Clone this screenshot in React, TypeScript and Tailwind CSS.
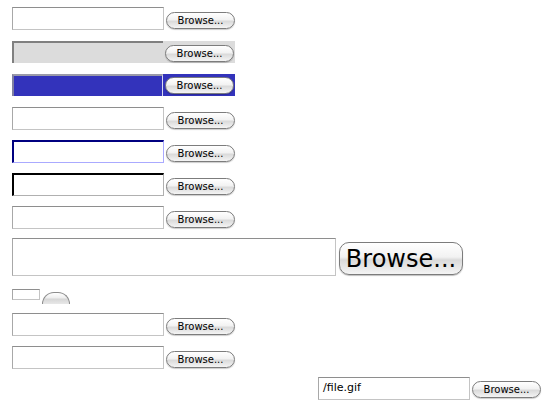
import React from 'react';

const font = { fontFamily: '"DejaVu Sans", "Liberation Sans", sans-serif' };

function AquaButton({ big, tiny }: { big?: boolean; tiny?: boolean }) {
  if (tiny) {
    return (
      <div className="ml-[2px] mt-[3px] h-[12px] w-[28px] rounded-t-full border border-b-0 border-[#8c8c8c] bg-[linear-gradient(#ffffff,#eeeeee_45%,#d6d6d6_55%,#e8e8e8)]" />
    );
  }
  if (big) {
    return (
      <div
        style={font}
        className="ml-[3px] mt-[4px] flex h-[33px] w-[124px] items-center justify-center rounded-[10px] border border-[#7c7c7c] bg-[linear-gradient(#ffffff,#f2f2f2_45%,#dadada_55%,#f4f4f4)] text-[24px] leading-none text-black shadow-[0_1px_1px_rgba(0,0,0,0.25)]"
      >
        Browse...
      </div>
    );
  }
  return (
    <div
      style={font}
      className="ml-[2px] flex h-[17px] w-[69px] items-center justify-center rounded-full border border-[#7c7c7c] bg-[linear-gradient(#ffffff,#f2f2f2_45%,#dadada_55%,#f4f4f4)] text-[10px] leading-none text-black shadow-[0_1px_1px_rgba(0,0,0,0.2)]"
    >
      Browse...
    </div>
  );
}

function Field({ box, wrap, btnTop = 'mt-[5px]', row }: { box: string; wrap?: string; btnTop?: string; row?: string }) {
  return (
    <div className={`h-[23px] ${row ?? ''}`}>
      <div className={`flex w-fit items-start ${wrap ?? ''}`}>
        <div className={box} />
        <div className={btnTop}>
          <AquaButton />
        </div>
      </div>
    </div>
  );
}

const plain =
  'h-[23px] w-[152px] border border-t-[#8e8e8e] border-l-[#a8a8a8] border-r-[#c4c4c4] border-b-[#c4c4c4] bg-white';

export default function App() {
  return (
    <div className="min-h-[409px] w-[552px] bg-white pl-[12px] pt-[7px]">
      <div className="flex flex-col gap-[10px]">
        <Field box={plain} row="h-[24px]" />
        <Field
          wrap="bg-[#dcdcdc]"
          btnTop="mt-[4px] mr-[1px]"
          box="h-[22px] w-[151px] border-l-2 border-t-2 border-l-[#808080] border-t-[#808080] bg-[#dcdcdc]"
        />
        <Field
          wrap="bg-[#3333bb]"
          btnTop="mt-[3px] mr-[1px]"
          box="h-[22px] w-[151px] border-l-2 border-t-2 border-r border-l-[#8080a0] border-t-[#9a9aa8] border-r-[#d8d8f0] bg-[#3333bb]"
        />
        <Field box={plain} />
        <Field box="h-[23px] w-[152px] border border-t-2 border-l-2 border-t-[#000080] border-l-[#000080] border-r-[#aaaaff] border-b-[#aaaaff] bg-white" />
        <Field box="h-[23px] w-[152px] border border-t-2 border-l-2 border-t-black border-l-black border-r-[#b0b0b0] border-b-[#b0b0b0] bg-white" />
        <Field box={plain} />
        <div className="-mt-[1px] flex w-fit items-start">
          <div className="h-[38px] w-[324px] border border-t-[#8e8e8e] border-l-[#a8a8a8] border-r-[#c4c4c4] border-b-[#c4c4c4] bg-white" />
          <AquaButton big />
        </div>
        <div className="mt-[3px] flex h-[14px] w-fit items-start">
          <div className="h-[11px] w-[28px] border border-t-[#8e8e8e] border-l-[#a8a8a8] border-r-[#c4c4c4] border-b-[#c4c4c4] bg-white" />
          <AquaButton tiny />
        </div>
        <Field box={plain} />
        <Field box={plain} />
      </div>
      <div className="ml-[306px] mt-[8px] flex w-fit items-start">
        <div
          style={font}
          className="flex h-[23px] w-[152px] items-center border border-t-[#8e8e8e] border-l-[#a8a8a8] border-r-[#c4c4c4] border-b-[#c4c4c4] bg-white pl-[4px] text-[11px] text-black"
        >
          /file.gif
        </div>
        <div className="mt-[4px]">
          <AquaButton />
        </div>
      </div>
    </div>
  );
}
